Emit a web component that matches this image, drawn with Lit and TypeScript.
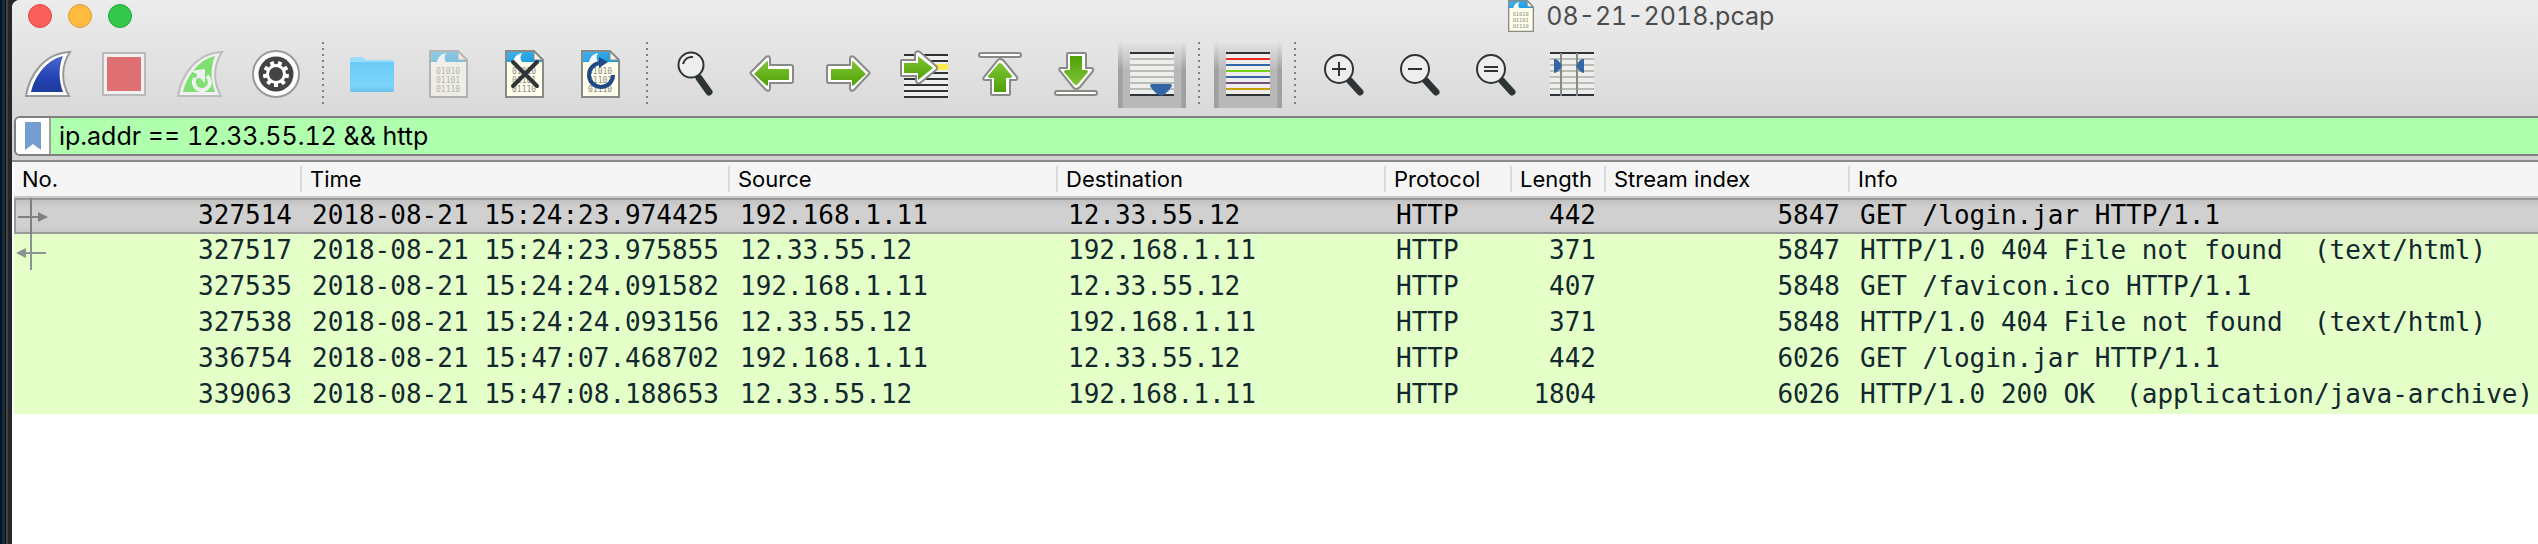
import { LitElement, html, svg, css, nothing } from "lit";
import { customElement } from "lit/decorators.js";

interface Packet {
  no: string; time: string; src: string; dst: string; proto: string; len: string; stream: string; info: string;
  mark?: "request" | "response";
}

const HOST = "192.168.1.11";
const PEER = "12.33.55.12";
const packets: Packet[] = [
  { no: "327514", time: "2018-08-21 15:24:23.974425", src: HOST, dst: PEER, proto: "HTTP", len: "442", stream: "5847", info: "GET /login.jar HTTP/1.1", mark: "request" },
  { no: "327517", time: "2018-08-21 15:24:23.975855", src: PEER, dst: HOST, proto: "HTTP", len: "371", stream: "5847", info: "HTTP/1.0 404 File not found  (text/html)", mark: "response" },
  { no: "327535", time: "2018-08-21 15:24:24.091582", src: HOST, dst: PEER, proto: "HTTP", len: "407", stream: "5848", info: "GET /favicon.ico HTTP/1.1" },
  { no: "327538", time: "2018-08-21 15:24:24.093156", src: PEER, dst: HOST, proto: "HTTP", len: "371", stream: "5848", info: "HTTP/1.0 404 File not found  (text/html)" },
  { no: "336754", time: "2018-08-21 15:47:07.468702", src: HOST, dst: PEER, proto: "HTTP", len: "442", stream: "6026", info: "GET /login.jar HTTP/1.1" },
  { no: "339063", time: "2018-08-21 15:47:08.188653", src: PEER, dst: HOST, proto: "HTTP", len: "1804", stream: "6026", info: "HTTP/1.0 200 OK  (application/java-archive)" },
];

const FIN = "M2 46C5 27 19 3 46 2C37 16 37 32 45 46Z";
const FIN_INNER = "M7 42C11 26 22 10 39 6C34 18 35 31 39 42Z";
const BACK_ARROW = "M3 24Q2 23 3 22L18 7Q22 5 22 9V15H43Q45 15 45 17V31Q45 33 43 33H22V38Q22 42 18 40Z";
const UP_ARROW = "M24 9Q26 9 28 11L41 27Q42 30 39 30H34V44Q34 45 33 45H16Q15 45 15 44V30H9Q6 30 8 27L21 11Q22 9 24 9Z";

/* One capture file sheet: page, blue banner with a fin, rows of bits. */
const sheet = () => svg`
  <path d="M6 1H34L43 10V47H6Z" fill="#fffeeb" stroke="none"/>
  <path d="M6 1H34L43 10V12H6Z" fill="url(#banner)"/>
  <path d="M13 12C14 7 17 4 22 3C20 6 20 9 22 12Z" fill="#fff"/>
  <path d="M34 1V10H43Z" fill="#f4f4ee" stroke="#888a85" stroke-width="1"/>
  <path d="M6 1H34L43 10V47H6Z" fill="none" stroke="#888a85" stroke-width="2"/>
  ${[24, 33, 42].map((y, i) => svg`<text x="12" y=${y} class="bits">${["01010", "01101", "01110"][i]}</text>`)}`;

const defs = svg`<defs>
  <linearGradient id="banner" x1="0" y1="0" x2="1" y2="1"><stop offset="0" stop-color="#45b4ea"/><stop offset="1" stop-color="#1597de"/></linearGradient>
  <linearGradient id="green" x1="0" y1="0" x2="0" y2="1"><stop offset="0" stop-color="#80c535"/><stop offset="1" stop-color="#4ea006"/></linearGradient>
  <linearGradient id="blue" x1="0" y1="0" x2="0" y2="1"><stop offset="0" stop-color="#4a66cf"/><stop offset=".6" stop-color="#2443b4"/><stop offset="1" stop-color="#1e3a9c"/></linearGradient>
  <linearGradient id="folder" x1="0" y1="0" x2="0" y2="1"><stop offset="0" stop-color="#6bcbf6"/><stop offset=".8" stop-color="#7cd4fb"/><stop offset="1" stop-color="#66bfe8"/></linearGradient>
</defs>`;

const backArrow = svg`
  <path d=${BACK_ARROW} fill="#fff" stroke="#888a85" stroke-width="2"/>
  <path d="M6 24L18 12L20 11V19H41V30H20V36L18 35Z" fill="url(#green)"/>`;
const upArrow = svg`
  <path d=${UP_ARROW} fill="#fff" stroke="#888a85" stroke-width="2"/>
  <rect x="3" y="3" width="42" height="4" rx="2" fill="#fff" stroke="#888a85" stroke-width="2"/>
  <path d="M24 13Q25 13 26 14L36 26Q36 28 34 28H30V42H18V28H14Q12 28 12 26L22 14Q23 13 24 13Z" fill="url(#green)"/>`;
const lens = (glyph: unknown) => svg`
  <path d="M30 31L40 42" stroke="#2e3436" stroke-width="7" stroke-linecap="round"/>
  <circle cx="19" cy="19" r="14" fill="#eeeeec" stroke="#2e3436" stroke-width="2"/>
  ${glyph}`;
const stripes = (colors: string[]) => svg`
  <rect x="2" y="2" width="44" height="44" fill="#eeeeec"/>
  ${colors.map((c, i) => svg`<rect x="2" y=${2 + i * 6} width="44" height="2" fill=${c}/>`)}`;
const INK = "#2e3436", ASH = "#babdb6";

const icons: Record<string, unknown> = {
  start: svg`<path d=${FIN} fill="#fff" stroke="#999" stroke-width="2"/><path d=${FIN_INNER} fill="url(#blue)"/>`,
  stop: svg`<rect x="3" y="3" width="42" height="42" fill="#f0f0f0" stroke="#bababa" stroke-width="2"/><rect x="7" y="7" width="34" height="34" fill="#df7071"/>`,
  restart: svg`<path d=${FIN} fill="#f0f0f0" stroke="#bdbdbd" stroke-width="2"/><path d=${FIN_INNER} fill="#80df73"/>
    <path d="M31 26A8 8 0 1 1 19 28" fill="none" stroke="#f0f0f0" stroke-width="4"/>
    <path d="M14 21L29 19V33L24 28L20 29L21 24Z" fill="#f0f0f0"/>`,
  options: svg`<circle cx="24" cy="24" r="23" fill="#fff" stroke="#999" stroke-width="2"/><circle cx="24" cy="24" r="17.500" fill="#444"/>
    <circle cx="24" cy="24" r="8.500" fill="none" stroke="#fff" stroke-width="3"/>
    ${Array.from({ length: 9 }, (_, i) => svg`<rect x="22" y="11" width="4" height="5" fill="#fff" transform=${`rotate(${i * 40 + 20} 24 24)`}/>`)}`,
  open: svg`<path d="M2 10Q2 7 4 7H14L18 10H44Q46 10 46 12V40H2Z" fill="#98ddfb"/><path d="M2 12H46V40Q46 42 44 42H4Q2 42 2 40Z" fill="url(#folder)"/>`,
  save: svg`<g opacity=".5">${sheet()}</g>`,
  close: svg`${sheet()}<path d="M13 12L37 36M37 12L13 36" stroke="#2e3436" stroke-width="4" stroke-linecap="round"/>`,
  reload: svg`${sheet()}<path d="M25 13A12 12 0 1 0 37 25" fill="none" stroke="#204a87" stroke-width="4"/><path d="M23 7L32 12L23 18Z" fill="#204a87"/>`,
  find: svg`<path d="M27 28L37 42" stroke="#2e3436" stroke-width="7" stroke-linecap="round"/>
    <circle cx="19" cy="15" r="12.500" fill="#eeeeec" stroke="#2e3436" stroke-width="2"/><path d="M11 14A9 9 0 0 1 21 7" fill="none" stroke="#2e3436" stroke-width="2"/>`,
  back: backArrow,
  forward: svg`<g transform="matrix(-1 0 0 1 48 0)">${backArrow}</g>`,
  goto: svg`<rect x="4" y="4" width="44" height="42" fill="#eeeeec"/><rect x="4" y="14" width="44" height="6" fill="#fce94f"/>
    ${[4, 10, 22, 28, 34, 40, 46].map((y) => svg`<rect x="4" y=${y} width="44" height="2" fill="#2e3436"/>`)}
    <path d="M2 10H15V4Q16 0 20 2L36 16Q38 18 36 20L20 33Q16 34 16 30V26H2Q1 26 1 25V11Q1 10 2 10Z" fill="#fff" stroke="#888a85" stroke-width="2"/>
    <path d="M4 13H18V6L33 18L18 30V23H4Z" fill="url(#green)"/>`,
  first: upArrow,
  last: svg`<g transform="matrix(1 0 0 -1 0 48)">${upArrow}</g>`,
  autoscroll: svg`${stripes([INK, ASH, ASH, ASH, ASH, ASH, ASH, INK])}<path d="M22 36Q22 34 24 34H42Q44 34 44 36Q42 40 37 44Q33 47 29 44Q24 40 22 36Z" fill="#3465a4"/>`,
  colorize: stripes([INK, "#ef2929", "#3465a4", "#73d216", "#3465a4", "#75507b", "#c4a000", INK]),
  zoomin: lens(svg`<path d="M12 19H26M19 12V26" stroke="#2e3436" stroke-width="2"/>`),
  zoomout: lens(svg`<path d="M12 19H26" stroke="#2e3436" stroke-width="2"/>`),
  zoomreset: lens(svg`<path d="M12 17H26M12 21H26" stroke="#2e3436" stroke-width="2"/>`),
  resize: svg`${stripes([INK, ASH, ASH, ASH, ASH, ASH, ASH, INK])}
    <path d="M13 3V46M29 3V46" stroke="#888a85" stroke-width="2"/>
    <path d="M6 9Q10 8 14 16Q10 23 6 23ZM36 9Q32 8 28 16Q32 23 36 23Z" fill="#3465a4"/>`,
};

const toolbar: [string, string][][] = [
  [["start", "Start capture"], ["stop", "Stop capture"], ["restart", "Restart capture"], ["options", "Capture options"]],
  [["open", "Open file"], ["save", "Save file"], ["close", "Close file"], ["reload", "Reload file"]],
  [["find", "Find packet"], ["back", "Previous packet"], ["forward", "Next packet"], ["goto", "Go to packet"], ["first", "First packet"], ["last", "Last packet"], ["autoscroll", "Auto scroll"]],
  [["colorize", "Colorize packet list"]],
  [["zoomin", "Zoom in"], ["zoomout", "Zoom out"], ["zoomreset", "Normal size"], ["resize", "Resize columns"]],
];
const pressed = new Set(["autoscroll", "colorize"]);

@customElement("app-root")
export class AppRoot extends LitElement {
  static styles = css`
    :host { display: flex; min-height: 100vh; overflow: hidden; font-family: Inter, "Liberation Sans", sans-serif; color: #000;
      background: linear-gradient(90deg, #071428 0 2px, #15303a 2px 5px, #0a1014 5px 6px, #444446 6px 8px, #262628 8px); }
    .window { flex: 1; min-width: 0; margin-left: 12px; background: #fff; border-top-left-radius: 8px; overflow: hidden; }
    .chrome { background: linear-gradient(#ececec, #d2d2d2); padding-bottom: 4px; }
    .titlebar { display: grid; grid-template-columns: 1fr auto 1fr; align-items: center; width: 129%; height: 32px; }
    .lights { display: flex; gap: 16px; padding-left: 16px; }
    .light { width: 24px; height: 24px; padding: 0; border-radius: 50%; border: 1px solid; }
    .red { background: #fc605c; border-color: #e2463f; }
    .amber { background: #fdbc40; border-color: #dfa033; }
    .lime { background: #34c84a; border-color: #24a732; }
    .title { display: flex; align-items: center; gap: 12px; margin: 0; font-size: 25px; line-height: 32px; font-weight: 400; font-variant-numeric: tabular-nums; color: #4c4c4c; }
    .title svg { width: 26px; height: 32px; }
    .toolbar { display: flex; gap: 8px; padding: 8px 2px; }
    .tool { display: grid; place-items: center; flex: none; width: 68px; height: 68px; padding: 0; border: 0; background: none; }
    .tool svg { width: 48px; height: 48px; }
    .tool[aria-pressed] { background:
      linear-gradient(#e7e7e7, transparent 45%),
      linear-gradient(90deg, #a0a0a0 0 4px, transparent 5px calc(100% - 5px), #a0a0a0 calc(100% - 4px)),
      #b8b8b8; }
    .split { flex: none; width: 12px; height: 62px; margin-top: 2px;
      background: repeating-linear-gradient(#808080 0 2px, transparent 2px 6px) 4px 0 / 2px 100% no-repeat; }
    .bits { font: 8px "DejaVu Sans Mono", monospace; fill: #8d8d88; }
    .filter { display: flex; height: 40px; box-sizing: border-box; margin-left: 2px; border: 2px solid #808080; border-right: 0; border-radius: 6px 0 0 6px; background: #afffaf; overflow: hidden; }
    .bookmark { flex: none; display: grid; place-items: center; width: 35px; padding: 0; border: 0; border-right: 2px solid #a0a0a0; background: #fff; }
    .expression { flex: 1; min-width: 0; padding: 0 8px; border: 0; background: none; font: 25px/36px Inter, "Liberation Sans", sans-serif; font-variant-numeric: tabular-nums; color: #000; outline: none; }
    table { width: 100%; table-layout: fixed; border-collapse: separate; border-spacing: 0; border-top: 2px solid #8a8a8a; padding-left: 2px; }
    col.no { width: 288px; } col.time { width: 428px; } col.addr { width: 328px; }
    col.proto { width: 126px; } col.len { width: 94px; } col.stream { width: 244px; }
    th { height: 34px; padding: 0; background: #f5f5f5; border-bottom: 2px solid #c8c8c8; text-align: left; font-size: 22px; line-height: 26px; font-weight: 400; white-space: nowrap; }
    .head { display: block; padding-left: 8px; border-right: 2px solid #dadada; }
    th:last-child .head { border-right: 0; }
    td { height: 36px; padding: 0 10px; background: #e4ffc7; color: #12272e; font: 26px/32px "DejaVu Sans Mono", monospace; white-space: pre; vertical-align: top; }
    td.num { text-align: right; }
    td.first { padding-left: 0; }
    .tick { display: flex; justify-content: space-between; }
    .tick svg { width: 36px; height: 36px; }
    .tick span { margin-left: auto; }
    .selected td { color: #000; line-height: 34px; background: linear-gradient(#9a9a9a 2px, #c2c2c2 2px, #d0d0d0 10px 28px, #c6c6c6 34px, #9a9a9a 34px); }
    .selected .first { box-shadow: inset 2px 0 #9a9a9a; }
  `;

  private tick(p: Packet) {
    if (!p.mark) return nothing;
    return p.mark === "request"
      ? html`<svg viewBox="0 0 36 36" aria-hidden="true"><path d="M16 0h2v36h-2zM4 18h20v2H4zM24 14l10 5-10 5z" fill="#808080"/></svg>`
      : html`<svg viewBox="0 0 36 36" aria-hidden="true"><path d="M16 0h2v36h-2zM12 18h20v2H12zM12 14L2 19l10 5z" fill="#8a9393"/></svg>`;
  }

  render() {
    return html`<main class="window">
      <header class="chrome">
        <div class="titlebar">
          <div class="lights">
            <button class="light red" aria-label="Close"></button>
            <button class="light amber" aria-label="Minimize"></button>
            <button class="light lime" aria-label="Zoom"></button>
          </div>
          <h1 class="title"><svg viewBox="5 0 39 48" preserveAspectRatio="none" aria-hidden="true">${defs}${sheet()}</svg>08-21-2018.pcap</h1>
        </div>
        <nav class="toolbar" aria-label="Main toolbar">
          ${toolbar.map((group, g) => html`${g ? html`<span class="split"></span>` : nothing}${group.map(([id, label]) => html`
            <button class="tool" aria-label=${label} aria-pressed=${pressed.has(id) ? "true" : nothing}><svg viewBox="0 0 48 48" aria-hidden="true">${icons[id]}</svg></button>`)}`)}
        </nav>
        <form class="filter" @submit=${(e: Event) => e.preventDefault()}>
          <button type="button" class="bookmark" aria-label="Filter bookmarks"><svg width="16" height="28" viewBox="0 0 16 28" aria-hidden="true"><path d="M0 1Q0 0 1 0H15Q16 0 16 1V28L8 22L0 28Z" fill="#729fcf"/></svg></button>
          <input class="expression" aria-label="Display filter" spellcheck="false" .value=${"ip.addr == 12.33.55.12 && http"} />
        </form>
      </header>
      <table>
        <colgroup><col class="no"><col class="time"><col class="addr"><col class="addr"><col class="proto"><col class="len"><col class="stream"><col></colgroup>
        <thead><tr>${["No.", "Time", "Source", "Destination", "Protocol", "Length", "Stream index", "Info"].map((h) => html`<th scope="col"><span class="head">${h}</span></th>`)}</tr></thead>
        <tbody>${packets.map((p, i) => html`<tr class=${i ? "" : "selected"}>
          <td class="first"><div class="tick">${this.tick(p)}<span>${p.no}</span></div></td>
          <td>${p.time}</td><td>${p.src}</td><td>${p.dst}</td><td>${p.proto}</td>
          <td class="num">${p.len}</td><td class="num">${p.stream}</td><td>${p.info}</td></tr>`)}</tbody>
      </table>
    </main>`;
  }
}
